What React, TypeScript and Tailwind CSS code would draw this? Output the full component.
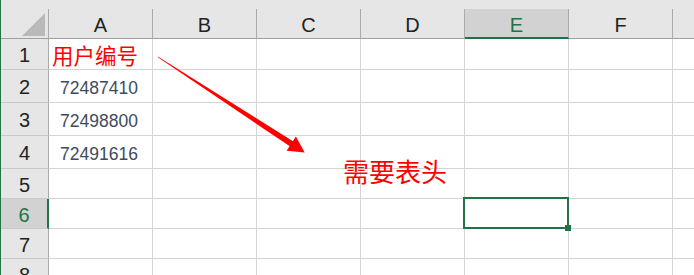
import React from "react";

const COLS = ["A", "B", "C", "D", "E", "F"];
const ROWS: { n: number; h: string }[] = [
  { n: 1, h: "h-[31px]" },
  { n: 2, h: "h-[33px]" },
  { n: 3, h: "h-[33px]" },
  { n: 4, h: "h-[33px]" },
  { n: 5, h: "h-[30px]" },
  { n: 6, h: "h-[30px]" },
  { n: 7, h: "h-[30px]" },
  { n: 8, h: "h-[30px]" },
];

const values: Record<string, string> = {
  A2: "72487410",
  A3: "72498800",
  A4: "72491616",
};

const SEL_COL = "E";
const SEL_ROW = 6;

function ColHeader({ label }: { label: string }) {
  const selected = label === SEL_COL;
  return (
    <div
      className={
        "flex w-[104px] shrink-0 items-center justify-center border-r border-[#ababab] pt-[3px] text-[20px] " +
        (selected
          ? "border-b-2 border-b-[#217346] bg-[#d2d2d2] text-[#217346]"
          : "border-b border-b-[#9f9f9f] text-[#222]")
      }
    >
      {label}
    </div>
  );
}

function Cell({ col, row }: { col: string; row: number }) {
  const key = `${col}${row}`;
  const value = values[key];
  const selected = col === SEL_COL && row === SEL_ROW;
  return (
    <div className="relative flex w-[104px] shrink-0 items-center border-r border-b border-[#d4d4d4] bg-white">
      {key === "A1" && (
        <span className="pl-[3px] pt-[2px] font-['Noto_Sans_CJK_SC',sans-serif] text-[21.5px] leading-none text-[#ff0000]">
          用户编号
        </span>
      )}
      {value && (
        <span className="pl-[11px] pt-[4px] text-[17.5px] text-[#3e4b5d]">{value}</span>
      )}
      {selected && (
        <div className="absolute -top-[2px] -left-[2px] -right-[1px] -bottom-[1px] z-10 border-2 border-[#217346]">
          <div className="absolute -right-[4px] -bottom-[4px] h-[6px] w-[6px] bg-[#217346]" />
        </div>
      )}
    </div>
  );
}

export default function App() {
  return (
    <div className="relative h-[275px] w-[694px] overflow-hidden border-l border-[#217346] bg-white font-['Liberation_Sans',Arial,sans-serif]">
      {/* top strip */}
      <div className="h-[9px] bg-[#e6e6e6]" />

      {/* column header row */}
      <div className="flex h-[30px] bg-[#e6e6e6]">
        <div className="flex w-[48px] shrink-0 items-end justify-end border-r border-b border-r-[#ababab] border-b-[#9f9f9f] pr-[2px] pb-[2px]">
          <svg width="24" height="24" viewBox="0 0 24 24">
            <polygon points="0,24 23,24 23,1" fill="#b9b9b9" />
          </svg>
        </div>
        {COLS.map((c) => (
          <ColHeader key={c} label={c} />
        ))}
        <div className="flex-1 border-b border-[#9f9f9f]" />
      </div>

      {/* rows */}
      {ROWS.map(({ n, h }) => {
        const selected = n === SEL_ROW;
        return (
          <div key={n} className={"flex " + h}>
            <div
              className={
                "flex w-[48px] shrink-0 items-center justify-center border-b border-b-[#c9c9c9] pt-[2px] text-[20px] " +
                (selected
                  ? "border-r-2 border-r-[#217346] bg-[#d2d2d2] text-[#217346]"
                  : "border-r border-r-[#ababab] bg-[#e6e6e6] text-[#222]")
              }
            >
              {n}
            </div>
            {COLS.map((c) => (
              <Cell key={c} col={c} row={n} />
            ))}
            <div className="flex-1 border-b border-[#d4d4d4]" />
          </div>
        );
      })}

      {/* floating text box */}
      <div className="absolute left-[342px] top-[158px] z-10 font-['Noto_Sans_CJK_SC',sans-serif] text-[26px] leading-none text-[#ff0000]">
        需要表头
      </div>

      {/* arrow */}
      <svg
        className="pointer-events-none absolute left-0 top-0 z-10"
        width="694"
        height="275"
        viewBox="0 0 694 275"
      >
        <g transform="translate(157 57) rotate(33.05)">
          <polygon points="0,-0.4 0,0.4 161,3 161,-3" fill="#ff0000" />
          <polygon points="159,-8.5 175,0 159,8.5" fill="#ff0000" />
        </g>
      </svg>
    </div>
  );
}
